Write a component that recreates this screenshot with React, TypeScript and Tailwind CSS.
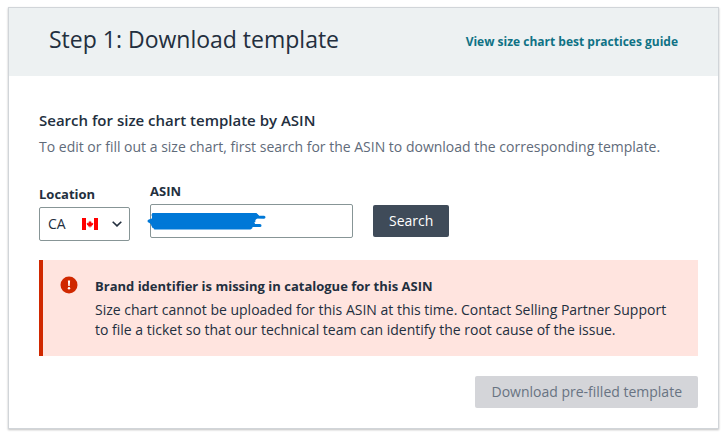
import React from "react";

function CanadaFlag() {
  return (
    <svg viewBox="0 0 16 12" className="h-3 w-4" aria-hidden="true">
      <path fill="#fff" d="M0 0h16v12H0z" />
      <path fill="#ff0000" d="M0 0h4v12H0zM12 0h4v12h-4z" />
      <path
        fill="#ff0000"
        d="M8 2.4l.8 1.5.7-.3-.2 1.8.9-.8.2.6 1-.1-.5 1.2.4.3-1.9 1.5.2.6-1.4-.2V10h-.4V8.500l-1.400.2.2-.6L4.700 6.600l.4-.3-.5-1.200 1 .1.2-.6.9.8-.2-1.800.7.3z"
      />
    </svg>
  );
}

function ChevronDown() {
  return (
    <svg viewBox="0 0 10 6" className="h-[6px] w-[10px]" fill="none" aria-hidden="true">
      <path d="M.7.7 5 4.900 9.300.7" stroke="#232f3e" strokeWidth="1.600" />
    </svg>
  );
}

function Scribble() {
  return (
    <svg
      viewBox="0 0 120 18"
      className="pointer-events-none absolute top-[8px] -left-[3px] h-[18px] w-[120px]"
      fill="none"
      stroke="#0078d7"
      strokeLinecap="round"
      strokeLinejoin="round"
      aria-hidden="true"
    >
      <path fill="#0078d7" strokeWidth="2" d="M6 2 109 2 111 4 107 8 106 11 107 12 104 15 6 15 5 12 2 9 6 7z" />
      <path strokeWidth="3" d="M6 3H109M103 5l14 .3M2 9H107M100 13.500l13 0M6 13l98 2.500M8 16h95" />
    </svg>
  );
}

function AlertIcon() {
  return (
    <svg viewBox="0 0 18 18" className="mt-[6px] h-[18px] w-[18px] shrink-0" aria-hidden="true">
      <circle cx="9" cy="9" r="8.500" fill="#d02800" />
      <path d="M7.900 4.500h2.200l-.4 5.500H8.300z" fill="#fff" />
      <circle cx="9" cy="12.300" r="1.200" fill="#fff" />
    </svg>
  );
}

export default function App() {
  return (
    <main className="bg-white pt-[7px] pr-[5px] pb-[6px] pl-2 font-['Open_Sans','Noto_Sans',sans-serif] text-sm text-[#232f3e]">
      <section className="border border-[#d1d5d9] shadow-[0_1px_2px_rgba(0,0,0,0.25)]">
        <header className="flex h-[68px] items-center justify-between bg-[#edf1f2] px-10">
          <h1 className="pb-[6px] text-[23px] leading-8">Step 1: Download template</h1>
          <a href="#guide" className="text-xs font-bold text-[#0f7285]">
            View size chart best practices guide
          </a>
        </header>

        <div className="pt-8 pr-5 pb-5 pl-[30px]">
          <h2 className="text-[15px] leading-6 font-semibold">Search for size chart template by ASIN</h2>
          <p className="mt-[3px] leading-6 text-[#5f6b7a]">
            To edit or fill out a size chart, first search for the ASIN to download the corresponding template.
          </p>

          <form className="mt-[22px] flex items-start gap-5" onSubmit={(e) => e.preventDefault()}>
            <div className="w-[91px] pt-[3px]">
              <label htmlFor="location" className="block text-[13px] leading-5 font-bold">
                Location
              </label>
              <div className="relative mt-[3px]">
                <select
                  id="location"
                  defaultValue="CA"
                  className="block h-[34px] w-full appearance-none rounded-[2px] border border-[#879596] bg-white pl-2"
                >
                  <option value="CA">CA</option>
                </select>
                <span className="pointer-events-none absolute inset-y-0 right-2 flex items-center gap-[14px]">
                  <CanadaFlag />
                  <ChevronDown />
                </span>
              </div>
            </div>

            <div className="w-[203px]">
              <label htmlFor="asin" className="block text-[13px] leading-5 font-bold">
                ASIN
              </label>
              <div className="relative mt-[3px]">
                <input
                  id="asin"
                  type="text"
                  className="block h-[34px] w-full rounded-[2px] border border-[#879596] bg-white px-2"
                />
                <Scribble />
              </div>
            </div>

            <button type="submit" className="mt-6 h-8 rounded-[2px] bg-[#3f4b59] px-4 text-white">
              Search
            </button>
          </form>

          <div role="alert" className="mt-[19px] flex gap-[17px] border-l-4 border-[#d02800] bg-[#ffe4df] py-[10px] pr-4 pl-[17px]">
            <AlertIcon />
            <div className="pb-[6px]">
              <h3 className="pt-1 text-[13px] leading-6 font-bold">Brand identifier is missing in catalogue for this ASIN</h3>
              <p className="mt-[2px] leading-5">
                Size chart cannot be uploaded for this ASIN at this time. Contact Selling Partner Support to file a ticket
                so that our technical team can identify the root cause of the issue.
              </p>
            </div>
          </div>

          <div className="mt-5 flex justify-end">
            <button type="button" disabled className="h-8 rounded-[2px] bg-[#d4d5d9] px-4 text-[#687382]">
              Download pre-filled template
            </button>
          </div>
        </div>
      </section>
    </main>
  );
}
